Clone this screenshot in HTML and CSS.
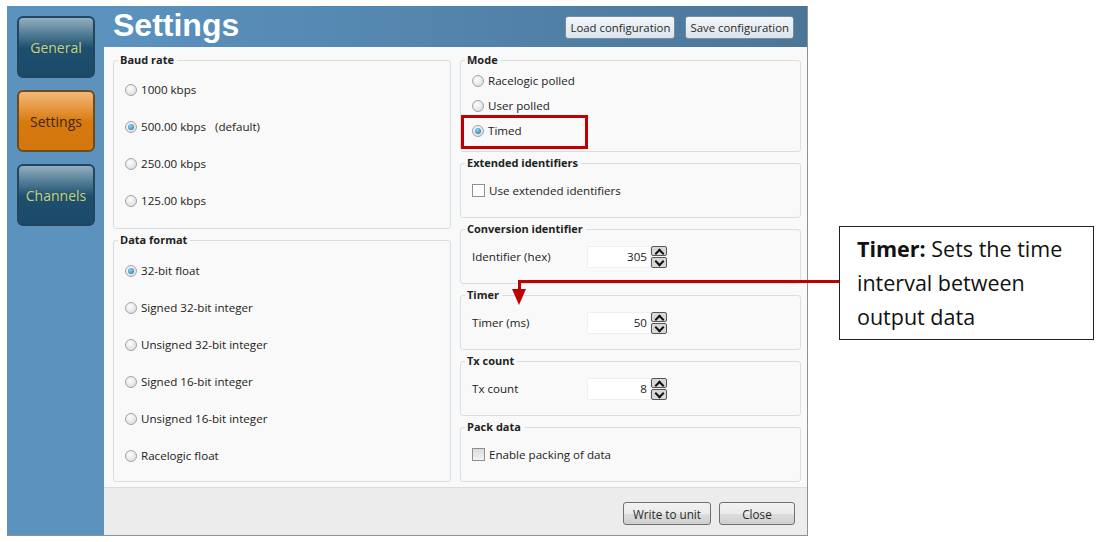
FILE: index.html
```html
<!DOCTYPE html>
<html lang="en">
<head>
  <meta charset="UTF-8">
  <title>Settings</title>
  <link rel="stylesheet" href="styles.css">
</head>
<body>
  <div id="page">
    <div id="window">
      <div id="sidebar">
        <div class="nav-btn">General</div>
        <div class="nav-btn active">Settings</div>
        <div class="nav-btn">Channels</div>
      </div>

      <div id="main">
        <div id="header">
          <h1>Settings</h1>
          <div class="header-btns">
            <button class="btn">Load configuration</button>
            <button class="btn">Save configuration</button>
          </div>
        </div>

        <div id="content">
          <div class="col left-col">
            <fieldset class="group baud">
              <legend>Baud rate</legend>
              <div class="row tall"><span class="radio"></span>1000 kbps</div>
              <div class="row tall"><span class="radio checked"></span>500.00 kbps&nbsp;&nbsp;&nbsp;(default)</div>
              <div class="row tall"><span class="radio"></span>250.00 kbps</div>
              <div class="row tall"><span class="radio"></span>125.00 kbps</div>
            </fieldset>

            <fieldset class="group data">
              <legend>Data format</legend>
              <div class="row tall"><span class="radio checked"></span>32-bit float</div>
              <div class="row tall"><span class="radio"></span>Signed 32-bit integer</div>
              <div class="row tall"><span class="radio"></span>Unsigned 32-bit integer</div>
              <div class="row tall"><span class="radio"></span>Signed 16-bit integer</div>
              <div class="row tall"><span class="radio"></span>Unsigned 16-bit integer</div>
              <div class="row tall"><span class="radio"></span>Racelogic float</div>
            </fieldset>
          </div>

          <div class="col right-col">
            <fieldset class="group mode">
              <legend>Mode</legend>
              <div class="row"><span class="radio"></span>Racelogic polled</div>
              <div class="row"><span class="radio"></span>User polled</div>
              <div class="row timed"><span class="radio checked"></span>Timed</div>
            </fieldset>

            <fieldset class="group small">
              <legend>Extended identifiers</legend>
              <div class="row"><span class="check"></span>Use extended identifiers</div>
            </fieldset>

            <fieldset class="group small">
              <legend>Conversion identifier</legend>
              <div class="field">
                <span class="field-label">Identifier (hex)</span>
                <span class="input">305</span>
                <span class="spin"><i class="up"></i><i class="down"></i></span>
              </div>
            </fieldset>

            <fieldset class="group small">
              <legend>Timer</legend>
              <div class="field">
                <span class="field-label">Timer (ms)</span>
                <span class="input">50</span>
                <span class="spin"><i class="up"></i><i class="down"></i></span>
              </div>
            </fieldset>

            <fieldset class="group small">
              <legend>Tx count</legend>
              <div class="field">
                <span class="field-label">Tx count</span>
                <span class="input">8</span>
                <span class="spin"><i class="up"></i><i class="down"></i></span>
              </div>
            </fieldset>

            <fieldset class="group small">
              <legend>Pack data</legend>
              <div class="row"><span class="check grey"></span>Enable packing of data</div>
            </fieldset>
          </div>
        </div>

        <div id="footer">
          <button class="btn plain write">Write to unit</button>
          <button class="btn plain close">Close</button>
        </div>
      </div>
    </div>

    <!-- annotation overlay -->
    <div id="highlight"></div>
    <div id="arrow-h"></div>
    <div id="arrow-v"></div>
    <div id="arrow-head"></div>
    <div id="callout"><b>Timer:</b> Sets the time<br>interval between<br>output data</div>
  </div>
</body>
</html>
```

FILE: styles.css
```css
*{
  margin: 0;
  padding: 0;
  box-sizing: border-box;
}

body {
  background: #fff;
  font-family: "Open Sans", "Noto Sans", sans-serif;
  font-size: 11.6px;
  color: #222;
}

#page {
  width: 1100px;
  height: 542px;
  padding: 6px 0 0 7px;
  position: relative;
}

#window {
  width: 801px;
  height: 530px;
  display: flex;
  border: 1px solid #8c9298;
  border-left: 0;
  border-top: 0;
}

#sidebar {
  width: 97px;
  background: #5b93be;
  display: flex;
  flex-direction: column;
  align-items: flex-start;
  gap: 12px;
  padding: 10px 0 0 10px;
}

.nav-btn {
  width: 78px;
  height: 62px;
  border: 2px solid #23465c;
  border-radius: 6px;
  background: linear-gradient(#93aebf 0%, #4d7891 30%, #1e4f6e 52%, #1b4a69 100%);
  color: #c9d176;
  font-size: 14px;
  display: flex;
  align-items: center;
  justify-content: center;
}

.nav-btn.active {
  border-color: #6e4a1c;
  background: linear-gradient(#f3b878 0%, #e4953c 30%, #d7790f 52%, #d4770d 100%);
  color: #3d2a0e;
}

#main {
  flex: 1;
  display: flex;
  flex-direction: column;
  background: #f9f9f9;
}

#header {
  height: 41px;
  background: linear-gradient(to right, #5b92bf, #4b7698);
  display: flex;
  align-items: center;
  justify-content: space-between;
  padding: 0 13px 0 9px;
}

#header h1 {
  font-family: "Liberation Sans", Arial, sans-serif;
  font-size: 32px;
  font-weight: bold;
  color: #fff;
  margin-top: -3px;
}

.header-btns {
  display: flex;
  gap: 10px;
  margin-top: 1px;
}

.header-btns .btn {
  font-size: 11.4px;
  padding: 0 4px;
}

.btn {
  font-family: "Open Sans", "Noto Sans", sans-serif;
  font-size: 11.7px;
  color: #2a2a2a;
  height: 23px;
  padding: 0 5px;
  border: 1px solid #7b8c9c;
  border-radius: 3px;
  background: linear-gradient(#f2f6f9, #dbe4ec);
}

.btn.plain {
  border-color: #707070;
  background: linear-gradient(#f2f2f2 0%, #ebebeb 50%, #dddddd 51%, #cfcfcf 100%);
}

.btn.write {
  width: 88px;
}

.btn.close {
  width: 76px;
}

#content {
  flex: 1;
  display: flex;
  gap: 9px;
  padding: 5px 6px 0 9px;
}

.col {
  display: flex;
  flex-direction: column;
}

.left-col {
  width: 338px;
  gap: 3px;
}

.right-col {
  flex: 1;
  gap: 3px;
}

.group {
  border: 1px solid #d5dfe6;
  border-radius: 3px;
  padding: 0 0 0 11px;
}

.group legend {
  font-weight: bold;
  font-size: 11px;
  margin-left: -7px;
  padding: 0 3px 0 2px;
  line-height: 16px;
}

.baud {
  height: 177px;
  padding-top: 3px;
}

.data {
  height: 250px;
  padding-top: 4px;
}

.mode {
  height: 100px;
  padding-top: 0;
}

.small {
  height: 63px;
}

.row {
  height: 25px;
  display: flex;
  align-items: center;
  gap: 4px;
}

.row.tall {
  height: 37px;
}

.radio {
  width: 12px;
  height: 12px;
  border-radius: 50%;
  border: 1px solid #a4a4a4;
  background: radial-gradient(circle at 40% 35%, #fdfdfd, #d6d6d6);
  display: inline-block;
  position: relative;
  flex-shrink: 0;
}

.radio.checked::after {
  content: '';
  position: absolute;
  left: 2px;
  top: 2px;
  width: 6px;
  height: 6px;
  border-radius: 50%;
  background: radial-gradient(circle at 40% 35%, #8fd4f5, #1b6fa3);
}

.check {
  width: 13px;
  height: 13px;
  border: 1px solid #8e8f8f;
  background: #fff;
  display: inline-block;
}

.check.grey {
  background: linear-gradient(#dcdcdc, #f2f2f2);
}

.small .row {
  height: 34px;
  padding-top: 5px;
}

.field {
  display: flex;
  align-items: center;
  height: 34px;
  padding-top: 5px;
}

.field-label {
  width: 115px;
}

.input {
  width: 64px;
  height: 22px;
  background: #fff;
  border: 1px solid #eef0f2;
  text-align: right;
  padding-right: 3px;
  line-height: 20px;
}

.spin {
  width: 16px;
  height: 22px;
  display: flex;
  flex-direction: column;
  gap: 1px;
}

.spin i {
  flex: 1;
  border: 1px solid #555;
  border-radius: 2px;
  background: #d8d8d8;
  position: relative;
}

.spin i::after {
  content: '';
  position: absolute;
  left: 4px;
  width: 5px;
  height: 5px;
  border-left: 2px solid #111;
  border-top: 2px solid #111;
}

.spin .up::after {
  top: 3px;
  transform: rotate(45deg);
}

.spin .down::after {
  top: 0;
  transform: rotate(-135deg);
}

#footer {
  height: 48px;
  background: #ececec;
  border-top: 1px solid #dcdcdc;
  display: flex;
  justify-content: flex-end;
  align-items: center;
  gap: 8px;
  padding: 4px 12px 0 0;
}

/* annotations */
#highlight {
  position: absolute;
  left: 461px;
  top: 115px;
  width: 127px;
  height: 34px;
  border: 3px solid #c00000;
}

#arrow-h {
  position: absolute;
  left: 518px;
  top: 280px;
  width: 322px;
  height: 3px;
  background: #c00000;
}

#arrow-v {
  position: absolute;
  left: 518px;
  top: 280px;
  width: 3px;
  height: 10px;
  background: #c00000;
}

#arrow-head {
  position: absolute;
  left: 512px;
  top: 289px;
  width: 0;
  height: 0;
  border-left: 7.5px solid transparent;
  border-right: 7.5px solid transparent;
  border-top: 16px solid #c00000;
}

#callout {
  position: absolute;
  left: 839px;
  top: 226px;
  width: 255px;
  height: 114px;
  border: 1px solid #222;
  padding: 5px 6px 0 17px;
  font-size: 21.5px;
  line-height: 34px;
  color: #111;
  white-space: nowrap;
}
```
